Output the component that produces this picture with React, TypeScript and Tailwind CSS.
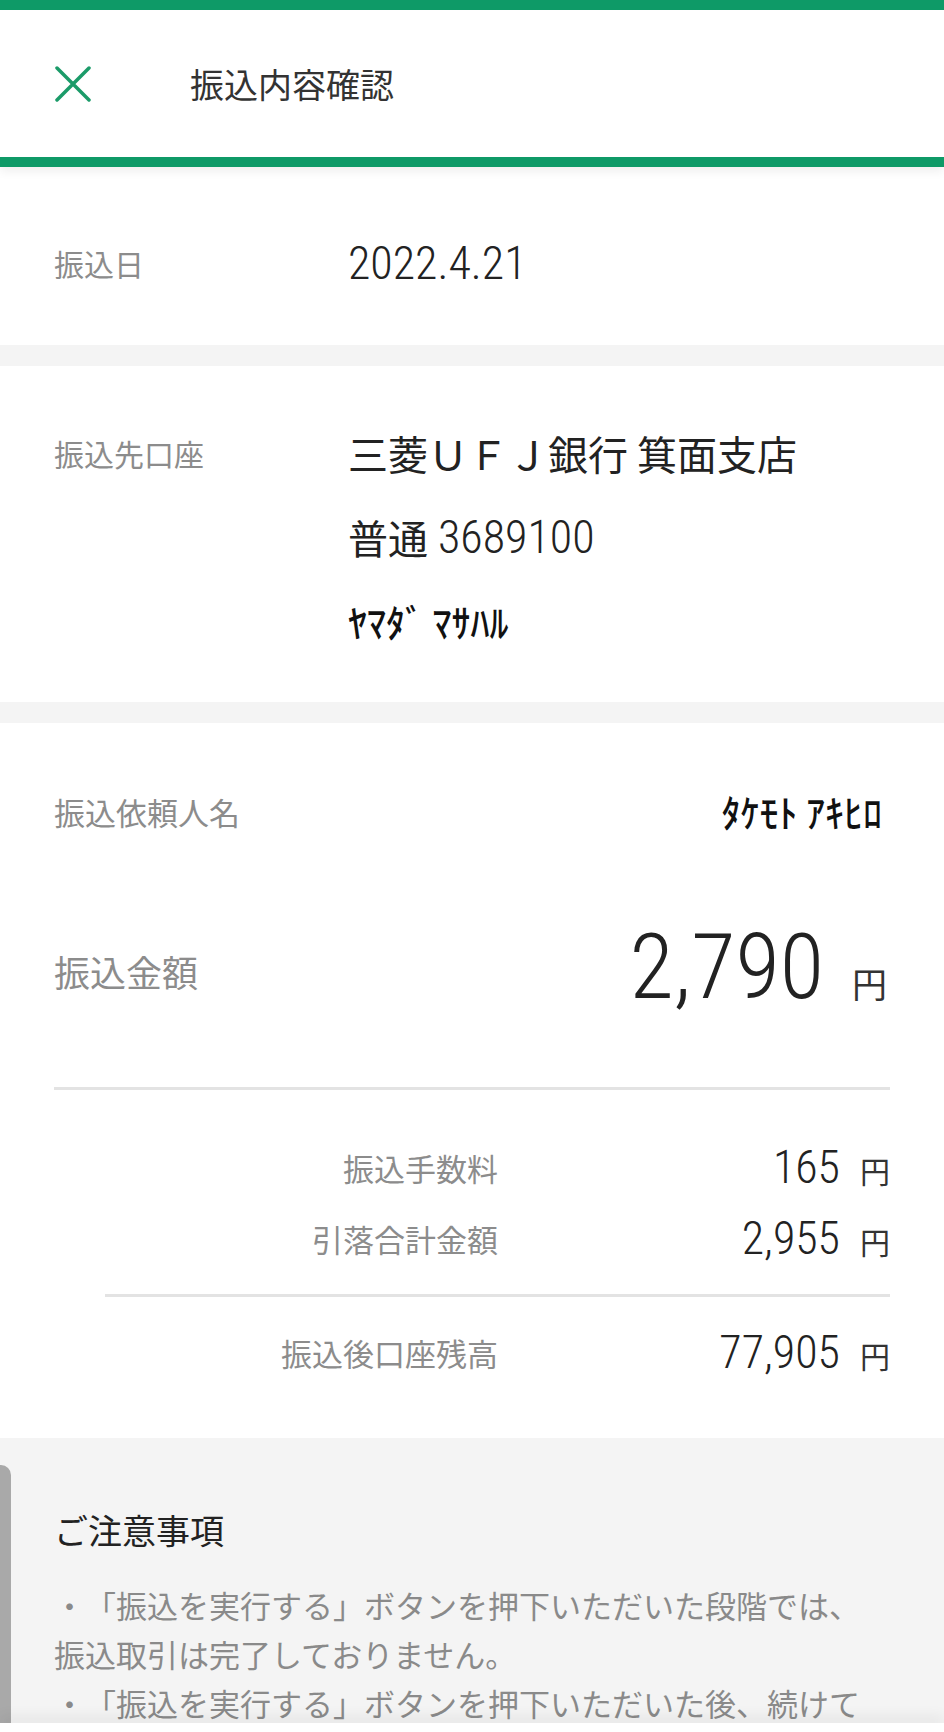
const jp = "font-['Noto_Sans_CJK_JP',sans-serif]"
const num = "font-['Roboto_Condensed','Liberation_Sans_Narrow','Noto_Sans_CJK_JP',sans-serif] font-light"
const kana = "font-['Noto_Sans_CJK_JP',sans-serif] font-medium text-[38px] text-[#111]"

function CloseIcon() {
  return (
    <svg width="36" height="36" viewBox="0 0 36 36" fill="none">
      <path d="M2 2 L34 34 M34 2 L2 34" stroke="#1b9b69" strokeWidth="3.5" strokeLinecap="round" />
    </svg>
  )
}

function Yen({ className }: { className: string }) {
  return <span className={`${jp} text-[#333] ${className}`}>円</span>
}

function SubRow({ label, value }: { label: string; value: string }) {
  return (
    <div className="grid h-[60px] grid-cols-[444px_1fr] items-center">
      <div className={`${jp} text-right text-[31px] leading-none text-[#8c8c8c]`}>{label}</div>
      <div className="flex items-baseline justify-end gap-[20px]">
        <span className={`${num} text-[46px] leading-none text-[#222]`}>{value}</span>
        <Yen className="text-[30px] leading-none" />
      </div>
    </div>
  )
}

export default function App() {
  return (
    <div className={`${jp} min-h-screen bg-[#f4f4f4] [text-spacing-trim:space-all]`}>
      {/* header */}
      <header className="relative z-10 bg-white shadow-[0_4px_10px_rgba(0,0,0,0.07)]">
        <div className="h-[10px] bg-[#0e9a67]" />
        <div className="flex h-[147px] items-center">
          <div className="w-[190px] pl-[55px]">
            <CloseIcon />
          </div>
          <h1 className="text-[34px] leading-none text-[#333]">振込内容確認</h1>
        </div>
        <div className="h-[10px] bg-[#0e9a67]" />
      </header>

      {/* 振込日 */}
      <section className="flex h-[178px] items-center bg-white px-[54px] pt-[14px]">
        <div className="w-[294px] text-[30px] leading-none text-[#8c8c8c]">振込日</div>
        <div className={`${num} text-[46px] leading-none text-[#222]`}>2022.4.21</div>
      </section>
      <div className="h-[21px] bg-[#f4f4f4]" />

      {/* 振込先口座 */}
      <section className="flex bg-white px-[54px] pb-[39px] pt-[45px]">
        <div className="w-[294px] text-[30px] leading-[84px] text-[#8c8c8c]">振込先口座</div>
        <div className="flex flex-col">
          <div className="flex h-[84px] items-center text-[40px] leading-none text-[#222]">三菱ＵＦＪ銀行 箕面支店</div>
          <div className="flex h-[84px] items-center gap-[10px] text-[#222]">
            <span className="text-[40px] leading-none">普通</span>
            <span className={`${num} text-[46px] leading-none`}>3689100</span>
          </div>
          <div className={`flex h-[84px] items-center leading-none ${kana}`}>ﾔﾏﾀﾞ ﾏｻﾊﾙ</div>
        </div>
      </section>
      <div className="h-[21px] bg-[#f4f4f4]" />

      {/* 依頼人・金額 */}
      <section className="bg-white px-[54px] pb-[56px] pt-[48px]">
        <div className="flex h-[80px] items-center justify-between">
          <div className="text-[31px] leading-none text-[#8c8c8c]">振込依頼人名</div>
          <div className={`pr-[8px] leading-none ${kana}`}>ﾀｹﾓﾄ ｱｷﾋﾛ</div>
        </div>
        <div className="mt-[40px] flex h-[160px] items-center justify-between">
          <div className="text-[36px] leading-none text-[#8c8c8c]">振込金額</div>
          <div className="flex items-baseline gap-[28px] pb-[8px] pr-[3px]">
            <span className={`${num} text-[91px] leading-none text-[#222]`}>2,790</span>
            <Yen className="text-[35px] leading-none" />
          </div>
        </div>
        <div className="mt-[36px] h-[3px] bg-[#e3e3e3]" />
        <div className="mt-[47px]">
          <SubRow label="振込手数料" value="165" />
        </div>
        <div className="mt-[11px]">
          <SubRow label="引落合計金額" value="2,955" />
        </div>
        <div className="ml-[51px] mt-[26px] h-[3px] bg-[#e3e3e3]" />
        <div className="mt-[25px]">
          <SubRow label="振込後口座残高" value="77,905" />
        </div>
      </section>

      {/* ご注意事項 */}
      <section className="relative bg-[#f4f4f4] px-[54px] pb-[80px] pt-[75px]">
        <div className="absolute bottom-0 left-0 top-[27px] w-[11px] rounded-tr-[10px] bg-[#a9a9a9]" />
        <h2 className="text-[34px] leading-[34px] text-[#222]">ご注意事項</h2>
        <div className="mt-[33px] text-[31px] leading-[49px] text-[#8a8a8a]">
          <p>
            ・「振込を実行する」ボタンを押下いただいた段階では、
            <br />
            振込取引は完了しておりません。
          </p>
          <p>
            ・「振込を実行する」ボタンを押下いただいた後、続けて
            <br />
            表示される画面で取引内容をご確認ください。
          </p>
        </div>
      </section>

      <div className="fixed bottom-0 left-0 right-0 h-[9px] bg-white shadow-[0_-6px_14px_rgba(0,0,0,0.08)]" />
    </div>
  )
}
